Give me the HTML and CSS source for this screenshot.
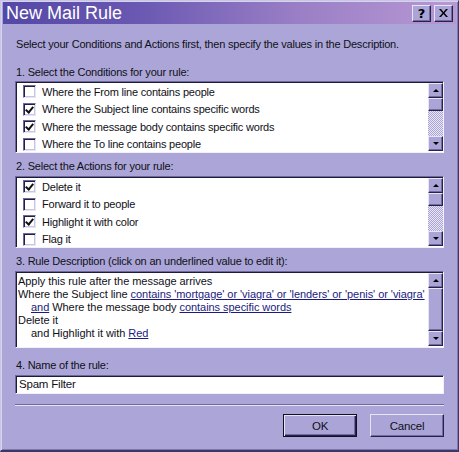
FILE: index.html
```html
<!DOCTYPE html>
<html>
<head>
<meta charset="utf-8">
<link rel="stylesheet" href="styles.css">
</head>
<body>
<div class="window">
  <div class="titlebar">
    <span class="title">New Mail Rule</span>
    <div class="tbtns">
      <span class="tbtn help">?</span>
      <span class="tbtn close"><svg width="9" height="8" viewBox="0 0 9 8"><path d="M0 0h2l2.5 3 2.5-3h2l-3.5 4 3.5 4h-2l-2.5-3-2.5 3h-2l3.5-4z" fill="#000"/></svg></span>
    </div>
  </div>
  <div class="content">
    <div class="intro">Select your Conditions and Actions first, then specify the values in the Description.</div>

    <div class="label l1">1. Select the Conditions for your rule:</div>
    <div class="listbox">
      <div class="items">
        <div class="row"><span class="cb"></span>Where the From line contains people</div>
        <div class="row"><span class="cb on"></span>Where the Subject line contains specific words</div>
        <div class="row"><span class="cb on"></span>Where the message body contains specific words</div>
        <div class="row"><span class="cb"></span>Where the To line contains people</div>
      </div>
      <div class="scroll">
        <div class="sbtn"><span class="up"></span></div>
        <div class="thumb"></div>
        <div class="track"></div>
        <div class="sbtn"><span class="down"></span></div>
      </div>
    </div>

    <div class="label l2">2. Select the Actions for your rule:</div>
    <div class="listbox">
      <div class="items">
        <div class="row"><span class="cb on"></span>Delete it</div>
        <div class="row"><span class="cb"></span>Forward it to people</div>
        <div class="row"><span class="cb on"></span>Highlight it with color</div>
        <div class="row"><span class="cb"></span>Flag it</div>
      </div>
      <div class="scroll">
        <div class="sbtn"><span class="up"></span></div>
        <div class="thumb"></div>
        <div class="track"></div>
        <div class="sbtn"><span class="down"></span></div>
      </div>
    </div>

    <div class="label l3">3. Rule Description (click on an underlined value to edit it):</div>
    <div class="listbox desc">
      <div class="dtext">
        <div>Apply this rule after the message arrives</div>
        <div>Where the Subject line <a>contains 'mortgage' or 'viagra' or 'lenders' or 'penis' or 'viagra'</a></div>
        <div class="ind"><a>and</a> Where the message body <a>contains specific words</a></div>
        <div>Delete it</div>
        <div class="ind">and Highlight it with <a>Red</a></div>
      </div>
      <div class="scroll">
        <div class="sbtn"><span class="up"></span></div>
        <div class="thumb long"></div>
        <div class="track"></div>
        <div class="sbtn"><span class="down"></span></div>
      </div>
    </div>

    <div class="label l4">4. Name of the rule:</div>
    <div class="input">Spam Filter</div>

    <div class="sep"></div>
    <div class="buttons">
      <div class="btn default"><span>OK</span></div>
      <div class="btn"><span>Cancel</span></div>
    </div>
  </div>
</div>
</body>
</html>
```
FILE: styles.css
```css
html, body {
  margin: 0;
  padding: 0;
  width: 459px;
  height: 452px;
  overflow: hidden;
  background: #aaa5d6;
}
.window {
  box-sizing: border-box;
  width: 459px;
  height: 452px;
  background: #aba6d7;
  border-top: 1px solid #c9c5e6;
  border-left: 1px solid #c9c5e6;
  border-right: 1px solid #3c3866;
  border-bottom: 2px solid #3c3866;
  box-shadow: inset 1px 1px 0 #d6d3ef, inset -1px -1px 0 #7d78ad;
  padding: 1px 2px 0 2px;
  font-family: "Liberation Sans", Arial, sans-serif;
  font-size: 11px;
  letter-spacing: -0.2px;
  color: #101018;
}
.titlebar {
  height: 22px;
  background: linear-gradient(90deg, #5448a6 0%, #6a58b2 30%, #9a7fc6 65%, #b898d4 100%);
  display: flex;
  align-items: center;
  justify-content: space-between;
  padding: 0 3px 0 3px;
}
.title {
  color: #fff;
  font-family: "Liberation Sans", Arial, sans-serif;
  font-size: 18px;
  letter-spacing: 0;
}
.tbtns {
  display: flex;
  gap: 3px;
}
.tbtn {
  box-sizing: border-box;
  width: 19px;
  height: 17px;
  background: #aaa5d6;
  border-top: 1px solid #e6e4f6;
  border-left: 1px solid #e6e4f6;
  border-right: 1px solid #25234a;
  border-bottom: 1px solid #25234a;
  box-shadow: inset -1px -1px 0 #716ca0;
  display: flex;
  align-items: center;
  justify-content: center;
  font-weight: bold;
  font-size: 14px;
  color: #000;
  letter-spacing: 0;
}
.help { font-family: "DejaVu Sans", sans-serif; font-size: 13px; }
.content {
  padding: 13px 12px 0 12px;
  display: flex;
  flex-direction: column;
}
.intro { line-height: 14px; margin-left: 1px; }
.label { line-height: 14px; margin-left: 1px; }
.l1 { margin-top: 14px; margin-bottom: 2px; }
.l2 { margin-top: 6px; margin-bottom: 3px; }
.l3 { margin-top: 6px; margin-bottom: 3px; }
.l4 { margin-top: 10px; margin-bottom: 3px; }
.listbox {
  display: flex;
  height: 72px;
  box-sizing: border-box;
  background: #fff;
  border-top: 1px solid #6e699c;
  border-left: 1px solid #6e699c;
  border-right: 1px solid #f2f0fa;
  border-bottom: 1px solid #f2f0fa;
  box-shadow: inset 1px 1px 0 #1d1b3a;
}
.listbox.desc { height: 77px; }
.items {
  flex: 1;
  padding: 1px 0 0 7px;
}
.row {
  height: 17.5px;
  display: flex;
  align-items: center;
  font-size: 11px;
}
.cb {
  box-sizing: border-box;
  width: 13px;
  height: 13px;
  margin-right: 6px;
  background: #fff;
  border-top: 1px solid #6e699c;
  border-left: 1px solid #6e699c;
  border-right: 1px solid #e6e4f6;
  border-bottom: 1px solid #e6e4f6;
  box-shadow: inset 1px 1px 0 #202040, inset -1px -1px 0 #c8c6dc;
  position: relative;
}
.cb.on::after {
  content: "";
  position: absolute;
  left: 2.5px;
  top: 1px;
  width: 3px;
  height: 6px;
  border-right: 2px solid #111;
  border-bottom: 2px solid #111;
  transform: rotate(40deg);
  transform-origin: 50% 50%;
}
.scroll {
  width: 15px;
  display: flex;
  flex-direction: column;
  margin: 1px 0 1px 0;
}
.sbtn, .thumb {
  box-sizing: border-box;
  background: #aaa5d6;
  border-top: 1px solid #e6e4f6;
  border-left: 1px solid #e6e4f6;
  border-right: 1px solid #25234a;
  border-bottom: 1px solid #25234a;
  box-shadow: inset -1px -1px 0 #716ca0;
  display: flex;
  align-items: center;
  justify-content: center;
}
.sbtn { height: 15px; }
.thumb { height: 13px; }
.thumb.long { height: 43px; }
.track {
  flex: 1;
  background-color: #d4d1ea;
  background-image: repeating-conic-gradient(#aaa5d6 0 25%, #e8e6f5 0 50%);
  background-size: 2px 2px;
}
.up, .down {
  width: 0;
  height: 0;
  border-left: 3px solid transparent;
  border-right: 3px solid transparent;
}
.up { border-bottom: 3px solid #000; }
.down { border-top: 3px solid #000; }
.dtext {
  flex: 1;
  padding: 3px 0 0 2px;
  font-size: 11px;
  letter-spacing: -0.05px;
  line-height: 13px;
  white-space: nowrap;
  overflow: hidden;
}
.ind { padding-left: 13px; }
a {
  color: #1a1a80;
  text-decoration: underline;
}
.input {
  box-sizing: border-box;
  height: 19px;
  background: #fff;
  border-top: 1px solid #6e699c;
  border-left: 1px solid #6e699c;
  border-right: 1px solid #f2f0fa;
  border-bottom: 1px solid #f2f0fa;
  box-shadow: inset 1px 1px 0 #1d1b3a;
  padding: 2px 0 0 3px;
  font-size: 11.5px;
}
.sep {
  margin-top: 10px;
  height: 1px;
  background: #6e699c;
  border-bottom: 1px solid #e6e4f6;
}
.buttons {
  display: flex;
  justify-content: flex-end;
  gap: 13px;
  margin-top: 8px;
  padding-right: 0;
}
.btn {
  box-sizing: border-box;
  width: 74px;
  height: 23px;
  background: #aaa5d6;
  border-top: 1px solid #e6e4f6;
  border-left: 1px solid #e6e4f6;
  border-right: 1px solid #25234a;
  border-bottom: 1px solid #25234a;
  box-shadow: inset -1px -1px 0 #716ca0;
  display: flex;
  align-items: center;
  justify-content: center;
  font-size: 11.5px;
}
.btn.default {
  border: 1px solid #101020;
  box-shadow: inset 1px 1px 0 #e6e4f6, inset -1px -1px 0 #25234a, inset -2px -2px 0 #716ca0;
}
```
